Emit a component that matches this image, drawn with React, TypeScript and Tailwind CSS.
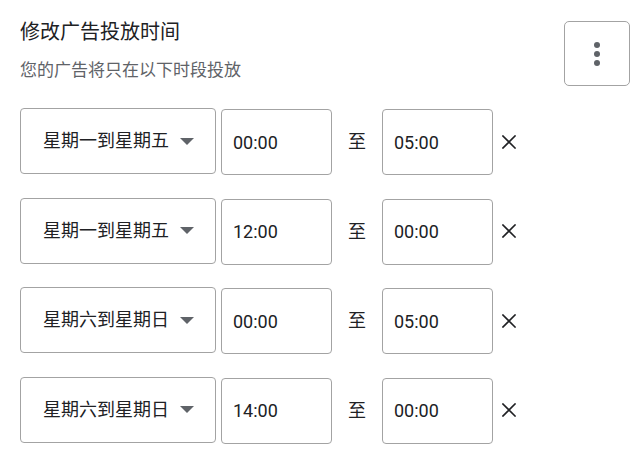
import React from "react";

const FONT = { fontFamily: 'Roboto, "Noto Sans CJK SC", sans-serif' };

interface ScheduleRow {
  days: string;
  start: string;
  end: string;
}

const ROWS: ScheduleRow[] = [
  { days: "星期一到星期五", start: "00:00", end: "05:00" },
  { days: "星期一到星期五", start: "12:00", end: "00:00" },
  { days: "星期六到星期日", start: "00:00", end: "05:00" },
  { days: "星期六到星期日", start: "14:00", end: "00:00" },
];

function Caret() {
  return (
    <svg width="14" height="7" viewBox="0 0 14 7" className="shrink-0">
      <path d="M0 0 L14 0 L7 7 Z" fill="#5f6368" />
    </svg>
  );
}

function CloseIcon() {
  return (
    <svg width="14" height="14" viewBox="0 0 14 14">
      <path d="M1 1 L13 13 M13 1 L1 13" stroke="#202124" strokeWidth="1.6" strokeLinecap="square" />
    </svg>
  );
}

function TimeBox({ value }: { value: string }) {
  return (
    <div className="mt-[1px] flex h-[66px] w-[111px] items-center rounded-[4px] border border-[#a3a3a3] bg-white pl-[11px] text-[18px] text-[#202124]">
      {value}
    </div>
  );
}

export default function App() {
  return (
    <div className="min-h-[462px] w-[631px] bg-white pl-[20px] pr-[1px] pt-[18px]" style={FONT}>
      {/* Header */}
      <div className="flex items-start justify-between">
        <div>
          <h1 className="text-[20px] leading-[28px] text-[#202124]">修改广告投放时间</h1>
          <p className="mt-[12px] text-[17px] leading-[24px] text-[#5f6368]">您的广告将只在以下时段投放</p>
        </div>
        <button className="mt-[3px] flex h-[65px] w-[66px] flex-col items-center justify-center gap-[3px] rounded-[5px] border border-[#a3a3a3] bg-white">
          <span className="h-[6px] w-[6px] rounded-full bg-[#5f6368]" />
          <span className="h-[6px] w-[6px] rounded-full bg-[#5f6368]" />
          <span className="h-[6px] w-[6px] rounded-full bg-[#5f6368]" />
        </button>
      </div>

      {/* Rows */}
      <div className="mt-[22px] flex flex-col gap-[22.5px]">
        {ROWS.map((row, idx) => (
          <div key={idx} className="flex items-start">
            <div className="flex h-[66px] w-[196px] items-center rounded-[4px] border border-[#a3a3a3] bg-white pl-[22px] text-[18px] text-[#202124]">
              <span className="leading-none">{row.days}</span>
              <span className="ml-[11px]">
                <Caret />
              </span>
            </div>
            <div className="ml-[5px]">
              <TimeBox value={row.start} />
            </div>
            <span className="mx-[16px] flex h-[67px] items-center text-[18px] text-[#202124]">至</span>
            <TimeBox value={row.end} />
            <span className="ml-[9px] flex h-[67px] items-center">
              <CloseIcon />
            </span>
          </div>
        ))}
      </div>
    </div>
  );
}
